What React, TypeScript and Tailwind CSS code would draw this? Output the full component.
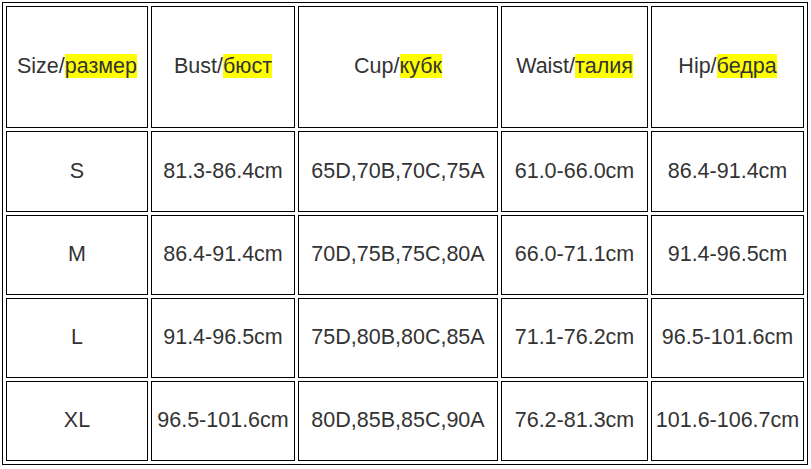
const headers: [string, string][] = [
  ['Size/', 'размер'],
  ['Bust/', 'бюст'],
  ['Cup/', 'кубк'],
  ['Waist/', 'талия'],
  ['Hip/', 'бедра'],
];

const rows = [
  ['S', '81.3-86.4cm', '65D,70B,70C,75A', '61.0-66.0cm', '86.4-91.4cm'],
  ['M', '86.4-91.4cm', '70D,75B,75C,80A', '66.0-71.1cm', '91.4-96.5cm'],
  ['L', '91.4-96.5cm', '75D,80B,80C,85A', '71.1-76.2cm', '96.5-101.6cm'],
  ['XL', '96.5-101.6cm', '80D,85B,85C,90A', '76.2-81.3cm', '101.6-106.7cm'],
];

const cell = 'flex items-center justify-center border border-black whitespace-nowrap';

export default function App() {
  return (
    <div className="bg-white w-[811px] h-[469px] p-[2px] font-['Liberation_Sans',Arial,sans-serif] text-[21.5px] leading-[24px] text-[#333]">
      <div className="grid w-[806px] grid-cols-[142px_144px_200px_147px_153px] grid-rows-[122px_81px_80px_80px_80px] gap-[3px] border border-black p-[3px]">
        {headers.map(([en, ru]) => (
          <div key={en} className={cell}>
            <span className="-translate-y-px">
              {en}
              <span className="bg-[#ffff00]">{ru}</span>
            </span>
          </div>
        ))}
        {rows.map((row) =>
          row.map((v, i) => (
            <div key={row[0] + i} className={cell}>
              <span className="-translate-y-px">{v}</span>
            </div>
          ))
        )}
      </div>
    </div>
  );
}
